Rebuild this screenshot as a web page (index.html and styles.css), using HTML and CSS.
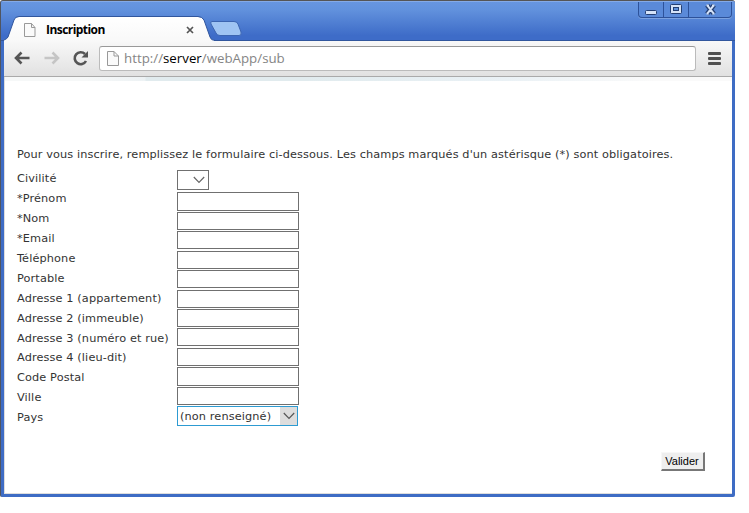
FILE: index.html
```html
<!DOCTYPE html>
<html lang="fr">
<head>
<meta charset="utf-8">
<title>Inscription</title>
<link rel="stylesheet" href="styles.css">
</head>
<body>
<div class="window">
  <header class="titlebar">
    <div class="tab">
      <svg class="tab-shape" width="250" height="27" viewBox="0 0 250 27">
        <defs><linearGradient id="tab" x1="0" y1="0" x2="0" y2="1"><stop offset="0" stop-color="#fff"/><stop offset="1" stop-color="#f8f8f8"/></linearGradient></defs>
        <path d="M0 27V25Q3 24 4 22L10 5Q11 2 15 2H194Q198 2 200 5L206 22Q207 25 210 25V27Z" fill="url(#tab)"/>
        <path d="M0 25Q3 24 4 22L10 5Q11 1.500 15 1.500H194Q198 1.500 200 5L206 22Q207 25.500 211 25.500H250" fill="none" stroke="#31569d"/>
        <path d="M208 6.500H230Q233 6.500 234 9L237 17Q238 20.500 235 20.500H216Q213 20.500 212 18L207 9Q206 6.500 208 6.500Z" fill="#9fc4f3" stroke="#3c65b1"/>
      </svg>
      <svg class="page-icon" width="12" height="14" viewBox="0 0 12 14"><path d="M1 .5H7.500L11 4.500V13.500H.5V.5Z" fill="#fafafa" stroke="#999"/><path d="M7.500 .5V4.500H11" fill="none" stroke="#999"/></svg>
      <span class="tab-title">Inscription</span>
      <svg class="close" width="8" height="8" viewBox="0 0 8 8"><path d="M1 1L7 7M7 1L1 7" stroke="#555" stroke-width="1.700"/></svg>
    </div>
    <div class="controls">
      <span><svg width="14" height="7"><rect x="1.500" y="1.500" width="11" height="4" rx="1" fill="#d5e3f8" stroke="#243f73"/></svg></span>
      <span><svg width="12" height="11"><rect x=".5" y=".5" width="11" height="9" rx="1" fill="#d5e3f8" stroke="#243f73"/><rect x="3.500" y="3.500" width="5" height="3" fill="#5f91db" stroke="#243f73"/></svg></span>
      <span><svg width="13" height="11"><path d="M3 1L10 10M10 1L3 10" stroke="#243f73" stroke-width="4.600"/><path d="M3.500 1.600L9.500 9.400M9.500 1.600L3.500 9.400M2.500 1.500H5M8 1.500H10.500M2.500 9.500H5M8 9.500H10.500" stroke="#d5e3f8" stroke-width="2"/></svg></span>
    </div>
  </header>
  <nav class="toolbar">
    <svg class="nav-icons" width="75" height="16" viewBox="0 0 75 16">
      <path d="M16.500 8H3M8.500 2.500L3 8L8.500 13.500" fill="none" stroke="#555" stroke-width="2.600"/>
      <path d="M31.500 8H45M39.500 2.500L45 8L39.500 13.500" fill="none" stroke="#c5c5c5" stroke-width="2.600"/>
      <path d="M73 11A6 6 0 1 1 72 4" fill="none" stroke="#555" stroke-width="2.600"/>
      <path d="M75 1V7.500H68.500Z" fill="#555"/>
    </svg>
    <div class="address">
      <svg width="12" height="15" viewBox="0 0 12 15"><path d="M.5 .5H7L11.500 5V14.500H.5Z" fill="#fafafa" stroke="#999"/><path d="M7 .5V5H11.500" fill="none" stroke="#999"/></svg>
      <span class="url">http://<b>server</b>/webApp/sub</span>
    </div>
    <div class="menu"><i></i><i></i><i></i></div>
  </nav>
  <main class="page">
    <div class="banner"></div>
    <p class="intro">Pour vous inscrire, remplissez le formulaire ci-dessous. Les champs marqués d'un astérisque (*) sont obligatoires.</p>
    <form class="form">
      <div class="labels">
        <label>Civilité</label><label>*Prénom</label><label>*Nom</label><label>*Email</label><label>Téléphone</label><label>Portable</label><label>Adresse 1 (appartement)</label><label>Adresse 2 (immeuble)</label><label>Adresse 3 (numéro et rue)</label><label>Adresse 4 (lieu-dit)</label><label>Code Postal</label><label>Ville</label><label>Pays</label>
      </div>
      <div class="fields">
        <div class="select title"><svg width="12" height="8"><path d="M.8 1L6 6.300L11.200 1" fill="none" stroke="#666" stroke-width="1.200"/></svg></div>
        <div class="inputs">
          <input class="tall"><input><input><input><input><input><input><input><input><input class="tall"><input>
        </div>
        <div class="select country"><span>(non renseigné)</span><div class="arrow"><svg width="12" height="8"><path d="M.8 1L6 6.300L11.200 1" fill="none" stroke="#555" stroke-width="1.200"/></svg></div></div>
      </div>
    </form>
    <button class="submit">Valider</button>
  </main>
</div>
</body>
</html>
```
FILE: styles.css
```css
* { box-sizing: border-box; }
body { margin: 0; background: #fff; font: 11.3px "DejaVu Sans", sans-serif; color: #333; }
svg { display: block; flex: none; }
.window {
  width: 735px; height: 497px; display: flex; flex-direction: column;
  background: #3e6cc4; border-top: 1px solid #555; border-left: 1px solid #505560;
  border-radius: 3px 3px 2px 2px; padding: 0 3px 3px;
  overflow: hidden;
}
.titlebar {
  height: 40px; flex: none; margin: 0 -3px; padding: 0 3px;
  display: flex; justify-content: space-between; align-items: flex-start;
  background: linear-gradient(#6796e0, #6292dd 20%, #3e6cc8 88%);
  border-top: 1px solid #84aae7; border-bottom: 1px solid #31569d;
}
.tab { position: relative; width: 250px; height: 27px; margin-top: 13px; display: flex; align-items: center; padding: 2px 0 0 20px; }
.tab-shape { position: absolute; left: 0; top: 0; }
.page-icon, .tab-title, .close { position: relative; }
.tab-title { width: 140px; margin-left: 10px; color: #000; font: bold 12px "Open Sans", sans-serif; letter-spacing: -.55px; }
.controls { display: flex; height: 16px; border: 1px solid #2d529a; border-top: 0; border-radius: 0 0 4px 4px; box-shadow: 0 1px #7ca2e0; background: #5a8ad9; }
.controls span { width: 25px; display: flex; justify-content: center; align-items: center; border-right: 1px solid #2d529a; }
.controls span:first-child svg { margin-top: 5px; }
.controls span:last-child { width: 42px; border: 0; }
.toolbar {
  height: 36px; flex: none; display: flex; align-items: center; padding: 0 11px 1px 9px;
  background: linear-gradient(#f8f8f8, #e1e1e1); border-bottom: 1px solid #aaa;
}
.nav-icons { overflow: visible; }
.address { width: 597px; height: 25px; margin-left: 11px; padding-left: 7px; display: flex; align-items: center; background: #fff; border: 1px solid #bbb; border-top-color: #999; border-radius: 3px; }
.url { margin-left: 5px; font: 13.3px "Open Sans", sans-serif; color: #858585; white-space: nowrap; }
.url b { font-weight: 400; color: #000; }
.menu { margin-left: auto; display: flex; flex-direction: column; gap: 2px; }
.menu i { width: 13px; height: 3px; background: #505050; border-radius: 1px; }
.page { flex: 1; background: #fff; border-left: 1px solid #ddd; border-bottom: 1px solid #ddd; padding: 0 12px; display: flex; flex-direction: column; }
.banner { height: 4px; margin: 0 -12px; background: linear-gradient(90deg, #f6f8f8 0 80px, #edf2f4 140px, #e1ebee 141px 300px, #eaf1f5 500px, #fafafa 650px); }
.intro { margin: 66px 0 0; height: 20px; line-height: 16px; white-space: nowrap; letter-spacing: .109px; }
.form { display: flex; height: 260px; letter-spacing: .12px; }
.labels { width: 160px; flex: none; padding-top: 2px; }
.labels label { display: block; height: 19.950px; line-height: 20px; white-space: nowrap; }
.fields { width: 122px; padding-top: 3px; }
.select { display: flex; height: 20px; border: 1px solid #707070; align-items: center; background: #fff; }
.title { width: 32px; justify-content: flex-end; padding-right: 3px; }
.inputs { display: flex; flex-direction: column; gap: 1.400px; margin-top: 2px; }
input { width: 122px; height: 18px; border: 1px solid #707070; padding: 0 3px; background: #fff; }
input.tall { height: 18.600px; }
.country { width: 121px; border-color: #2d9bd2; margin-top: 1px; padding-left: 2px; justify-content: space-between; white-space: nowrap; }
.arrow { width: 17px; align-self: stretch; display: flex; align-items: center; justify-content: center; background: #ddd; }
.submit { align-self: flex-end; width: 44px; height: 19px; margin: 25px 15px 0 0; padding: 0 1px 0 0; border: 1px solid #f7f7f7; border-right: 2px solid #777; border-bottom: 2px solid #777; background: #eee; color: #000; font: 11px "Liberation Sans", sans-serif; }
```
